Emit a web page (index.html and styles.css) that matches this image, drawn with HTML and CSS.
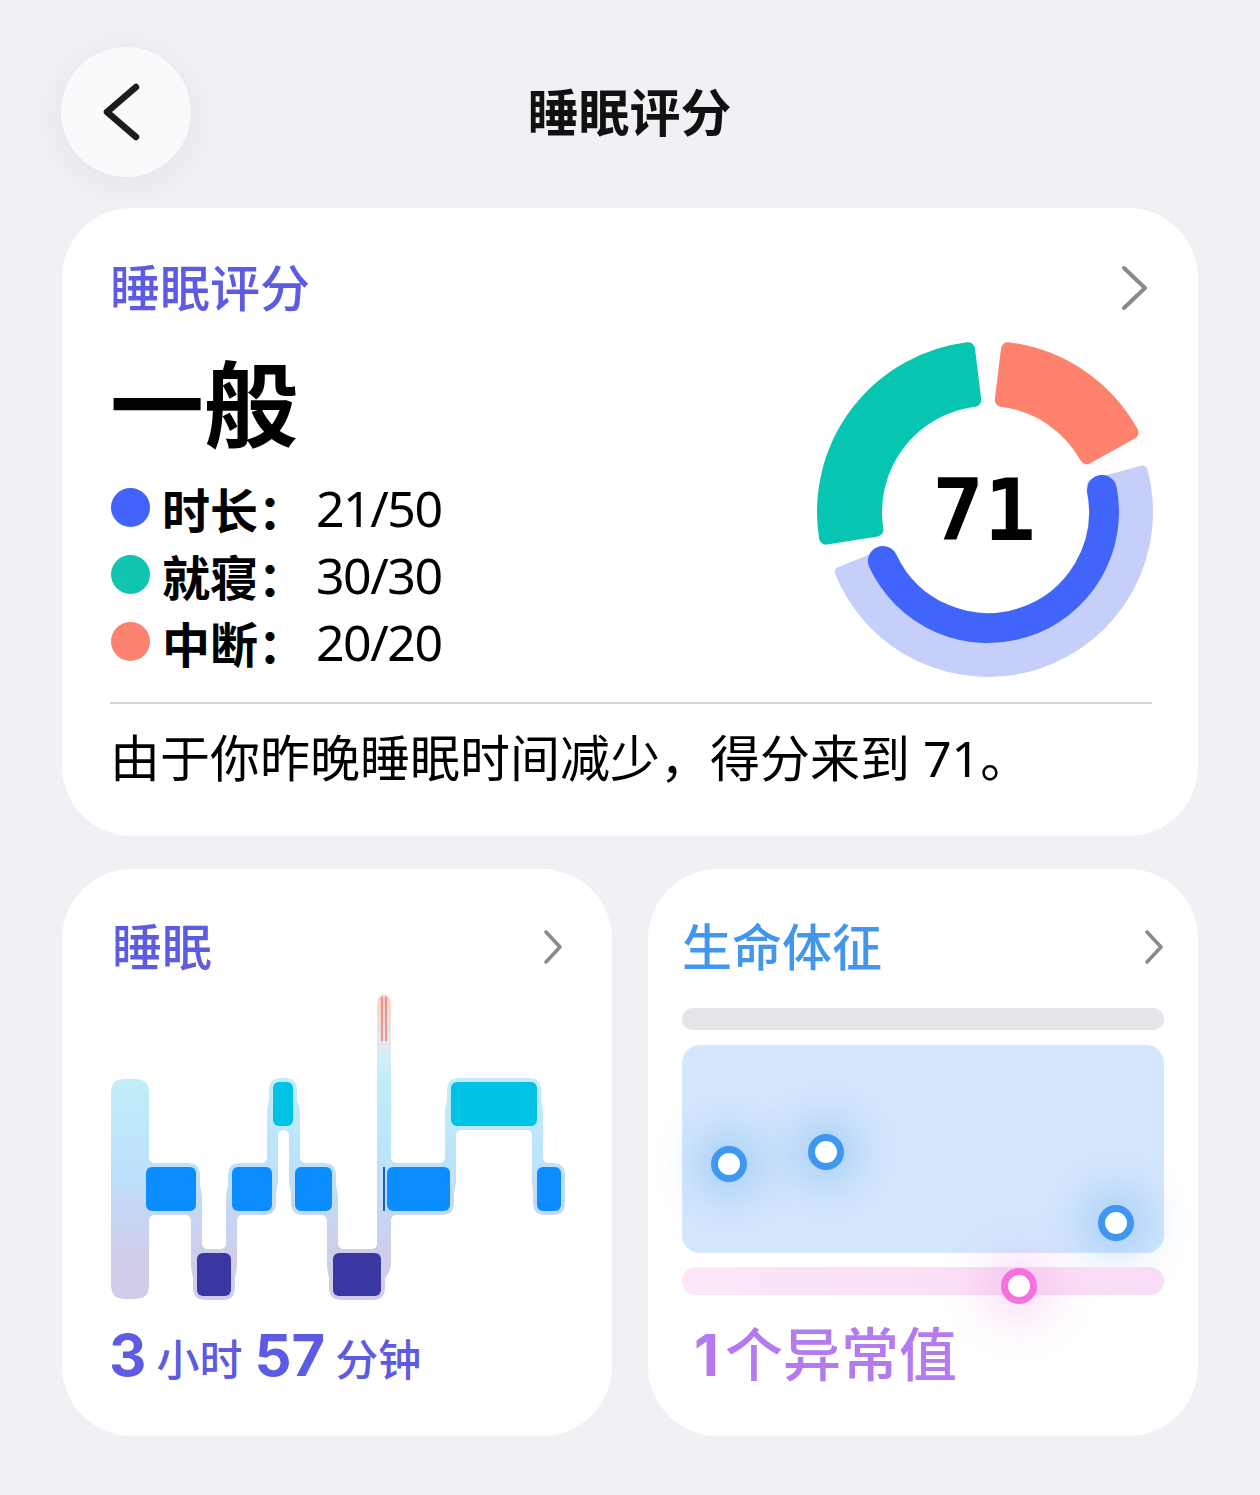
FILE: index.html
```html
<!DOCTYPE html>
<html lang="zh-CN">
<head>
    <meta charset="UTF-8">
    <meta name="viewport" content="width=device-width, initial-scale=1.0">
    <title>睡眠评分</title>
    <link rel="stylesheet" href="styles.css">
</head>
<body>
    <div class="page">
        <header class="topbar">
            <button class="back" aria-label="返回">
                <svg width="130" height="130" viewBox="0 0 130 130">
                    <polyline points="75,40 46,65 75,90" fill="none" stroke="#1c1c1e" stroke-width="6.5" stroke-linecap="round" stroke-linejoin="round"/>
                </svg>
            </button>
            <h1 class="title">睡眠评分</h1>
            <span></span>
        </header>

        <section class="card score-card">
            <div class="card-head">
                <h2 class="card-title indigo">睡眠评分</h2>
                <svg class="chev chev-lg" width="28" height="46" viewBox="0 0 28 46">
                    <polyline points="3,3 24,23 3,43" fill="none" stroke="#8a8a8e" stroke-width="4" stroke-linecap="round" stroke-linejoin="round"/>
                </svg>
            </div>
            <div class="score-body">
                <div class="score-left">
                    <div class="grade">一般</div>
                    <ul class="legend">
                        <li><span class="dot dot-blue"></span><span class="lbl">时长：</span><span class="val">21/50</span></li>
                        <li><span class="dot dot-teal"></span><span class="lbl">就寝：</span><span class="val">30/30</span></li>
                        <li><span class="dot dot-coral"></span><span class="lbl">中断：</span><span class="val">20/20</span></li>
                    </ul>
                </div>
                <svg class="donut" width="346" height="346" viewBox="0 0 346 346">
                    <path d="M 327.54 131.59 A 160 160 0 0 1 24.65 232.94 L 72.86 213.46 A 108 108 0 0 0 277.32 145.05 Z" fill="#c5cffa" stroke="#c5cffa" stroke-width="10" stroke-linejoin="round"/>
                    <path d="M 11.02 198.65 A 164 164 0 0 1 153.01 10.23 L 159.23 60.85 A 113 113 0 0 0 61.39 190.67 Z" fill="#06c6b1" stroke="#06c6b1" stroke-width="14" stroke-linejoin="round"/>
                    <path d="M 192.99 10.23 A 164 164 0 0 1 316.43 93.49 L 271.83 118.22 A 113 113 0 0 0 186.77 60.85 Z" fill="#fe826d" stroke="#fe826d" stroke-width="14" stroke-linejoin="round"/>
                    <path d="M 286.87 150.87 A 116 116 0 0 1 67.87 222.02" fill="none" stroke="#4165fa" stroke-width="30" stroke-linecap="round"/>
                    <text x="169" y="201" text-anchor="middle" class="donut-num">71</text>
                </svg>
            </div>
            <div class="divider"></div>
            <p class="summary">由于你昨晚睡眠时间减少，得分来到 71。</p>
        </section>

        <div class="tiles">
            <section class="card tile sleep-tile">
                <div class="card-head">
                    <h2 class="card-title indigo">睡眠</h2>
                    <svg class="chev" width="20" height="36" viewBox="0 0 20 36">
                        <polyline points="3,3 17,18 3,33" fill="none" stroke="#8a8a8e" stroke-width="3.6" stroke-linecap="round" stroke-linejoin="round"/>
                    </svg>
                </div>
                <svg class="stages" width="451" height="310" viewBox="0 0 451 310">
                    <defs>
                        <linearGradient id="stage" x1="0" y1="0" x2="0" y2="310" gradientUnits="userSpaceOnUse">
                            <stop offset="0" stop-color="#fcd0c4"/>
                            <stop offset="0.2" stop-color="#d9eef6"/>
                            <stop offset="0.3" stop-color="#c0edf8"/>
                            <stop offset="0.6" stop-color="#bde0fc"/>
                            <stop offset="0.85" stop-color="#cfcdea"/>
                            <stop offset="1" stop-color="#cfcdea"/>
                        </linearGradient>
                        <filter id="goo" x="-5%" y="-5%" width="110%" height="110%" color-interpolation-filters="sRGB">
                            <feGaussianBlur in="SourceGraphic" stdDeviation="3.5" result="blur"/>
                            <feColorMatrix in="blur" mode="matrix" values="1 0 0 0 0  0 1 0 0 0  0 0 1 0 0  0 0 0 18 -7" result="goo"/>
                            <feComposite in="SourceGraphic" in2="goo" operator="atop"/>
                        </filter>
                    </defs>
                    <g fill="url(#stage)" filter="url(#goo)">
                        <rect x="0" y="89" width="36" height="218" rx="8"/>
                        <rect x="31" y="173" width="56" height="50" rx="6"/>
                        <rect x="82" y="259" width="40" height="49" rx="6"/>
                        <rect x="117" y="173" width="46" height="50" rx="6"/>
                        <rect x="158" y="88" width="26" height="50" rx="6"/>
                        <rect x="180" y="173" width="43" height="50" rx="6"/>
                        <rect x="218" y="259" width="54" height="49" rx="6"/>
                        <rect x="272" y="173" width="69" height="50" rx="6"/>
                        <rect x="336" y="88" width="92" height="50" rx="6"/>
                        <rect x="422" y="173" width="30" height="50" rx="6"/>
                        <rect x="80" y="198" width="9" height="85"/>
                        <rect x="115" y="198" width="9" height="85"/>
                        <rect x="156" y="113" width="9" height="85"/>
                        <rect x="178" y="113" width="9" height="85"/>
                        <rect x="216" y="198" width="9" height="85"/>
                        <rect x="266" y="3" width="12" height="281" rx="6"/>
                        <rect x="334" y="113" width="9" height="85"/>
                        <rect x="421" y="113" width="9" height="85"/>
                    </g>
                    <g fill="#0b8cff">
                        <rect x="34" y="176" width="50" height="44" rx="6"/>
                        <rect x="120" y="176" width="40" height="44" rx="6"/>
                        <rect x="183" y="176" width="37" height="44" rx="6"/>
                        <rect x="275" y="176" width="63" height="44" rx="6"/>
                        <rect x="425" y="176" width="24" height="44" rx="6"/>
                    </g>
                    <g fill="#3a36a2">
                        <rect x="85" y="262" width="34" height="43" rx="6"/>
                        <rect x="221" y="262" width="48" height="43" rx="6"/>
                    </g>
                    <g fill="#00c2e5">
                        <rect x="161" y="91" width="20" height="44" rx="6"/>
                        <rect x="339" y="91" width="86" height="44" rx="6"/>
                    </g>
                    <g stroke="#ee7b6b" stroke-width="1.5">
                        <line x1="270" y1="6" x2="270" y2="50"/>
                        <line x1="274" y1="6" x2="274" y2="50"/>
                    </g>
                    <line x1="272" y1="176" x2="272" y2="220" stroke="#1a5fbf" stroke-width="2"/>
                </svg>
                <div class="duration indigo">
                    <span class="num first">3</span><span class="unit">小时</span><span class="num">57</span><span class="unit">分钟</span>
                </div>
            </section>

            <section class="card tile vitals-tile">
                <div class="card-head">
                    <h2 class="card-title sky">生命体征</h2>
                    <svg class="chev" width="20" height="36" viewBox="0 0 20 36">
                        <polyline points="3,3 17,18 3,33" fill="none" stroke="#8a8a8e" stroke-width="3.6" stroke-linecap="round" stroke-linejoin="round"/>
                    </svg>
                </div>
                <div class="vbar"></div>
                <div class="range">
                    <span class="pin" style="left: 29px; top: 101px;"></span>
                    <span class="pin" style="left: 126px; top: 89px;"></span>
                    <span class="pin" style="left: 416px; top: 160px;"></span>
                </div>
                <div class="pink-bar">
                    <span class="pin pin-pink" style="left: 319px; top: 1px;"></span>
                </div>
                <div class="outliers"><span class="num">1</span>个异常值</div>
            </section>
        </div>
    </div>
</body>
</html>
```

FILE: styles.css
```css
body {
    margin: 0;
    background-color: #f0f0f5;
    color: #000;
    font-family: "Noto Sans", "Noto Sans CJK SC", sans-serif;
}

.page {
    padding: 47px 62px 0 62px;
}

.topbar {
    display: grid;
    grid-template-columns: 130px 1fr 130px;
    align-items: center;
    height: 130px;
    margin-left: -1px;
}

.back {
    width: 130px;
    height: 130px;
    padding: 0;
    border: none;
    border-radius: 50%;
    background: #fafafd;
    box-shadow: 0 6px 40px rgba(0, 0, 0, 0.06);
}

.back svg {
    display: block;
}

.title {
    margin: 0;
    text-align: center;
    font-size: 51px;
    line-height: 51px;
    font-weight: 700;
    color: #111;
}

.card {
    background: #ffffff;
    border-radius: 70px;
}

.score-card {
    margin-top: 31px;
    padding: 56px 46px 53px 48px;
}

.card-head {
    display: flex;
    align-items: center;
    justify-content: space-between;
    height: 48px;
}

.card-title {
    margin: 0;
    font-size: 50px;
    line-height: 48px;
    font-weight: 500;
}

.indigo {
    color: #5d5ae4;
}

.sky {
    color: #4396ee;
}

.chev {
    display: block;
}

.chev-lg {
    margin-right: 3px;
}

.score-body {
    display: flex;
    justify-content: space-between;
    align-items: flex-start;
}

.score-left {
    padding-top: 46px;
}

.grade {
    font-size: 94px;
    line-height: 94px;
    font-weight: 700;
}

.legend {
    list-style: none;
    margin: 22px 0 0 0;
    padding: 0;
}

.legend li {
    display: flex;
    align-items: center;
    height: 67px;
}

.dot {
    width: 39px;
    height: 39px;
    border-radius: 50%;
    margin-left: 1px;
    margin-right: 12px;
}

.dot-blue {
    background: #4163fb;
}

.dot-teal {
    background: #10c4b0;
}

.dot-coral {
    background: #fd826f;
}

.lbl {
    font-size: 48px;
    font-weight: 700;
}

.val {
    margin-left: 10px;
    font-size: 50px;
    letter-spacing: -1.5px;
}

.donut {
    display: block;
    margin-top: 27px;
    margin-right: -9px;
}

.donut-num {
    font-family: "DejaVu Sans Mono", monospace;
    font-weight: 700;
    font-size: 86px;
    fill: #000;
}

.divider {
    margin-top: 17px;
    height: 1.5px;
    background: #d4d4d8;
}

.summary {
    margin: 29px 0 0 0;
    font-size: 50px;
    line-height: 50px;
    color: #000;
}

.tiles {
    display: grid;
    grid-template-columns: 1fr 1fr;
    gap: 36px;
    margin-top: 33px;
}

.tile {
    height: 567px;
    box-sizing: border-box;
}

.sleep-tile {
    padding: 54px 49px 0 50px;
}

.vitals-tile {
    padding: 54px 34px 0 34px;
}

.stages {
    display: block;
    margin-top: 20px;
    overflow: visible;
}

.duration {
    display: flex;
    align-items: baseline;
    margin-top: 24px;
    height: 60px;
    line-height: 60px;
}

.duration .num {
    font-family: Inter, "Noto Sans", sans-serif;
    font-size: 58px;
    font-weight: 700;
}

.duration .first {
    margin-left: -3px;
}

.duration .unit {
    font-size: 43px;
    font-weight: 500;
    margin: 0 12px 0 10px;
}

.vbar {
    margin-top: 37px;
    height: 22px;
    border-radius: 11px;
    background: #e4e4e9;
}

.range {
    position: relative;
    margin-top: 15px;
    height: 208px;
    border-radius: 18px;
    background: #d4e7fc;
}

.pink-bar {
    position: relative;
    margin-top: 14px;
    height: 28px;
    border-radius: 14px;
    background: linear-gradient(90deg, #fce6f8, #f9dcf5);
}

.pin {
    position: absolute;
    width: 36px;
    height: 36px;
    box-sizing: border-box;
    border: 7px solid #3f97f2;
    border-radius: 50%;
    background: #ffffff;
    box-shadow: 0 0 44px 16px rgba(64, 150, 242, 0.3);
}

.pin-pink {
    border-color: #f571de;
    box-shadow: 0 0 44px 16px rgba(245, 113, 222, 0.25);
}

.outliers {
    margin-top: 29px;
    padding-left: 12px;
    height: 60px;
    line-height: 60px;
    font-size: 58px;
    font-weight: 500;
    color: #b47af0;
}

.outliers .num {
    font-family: Inter, "Noto Sans", sans-serif;
    font-weight: 700;
    margin-right: 6px;
}
```
